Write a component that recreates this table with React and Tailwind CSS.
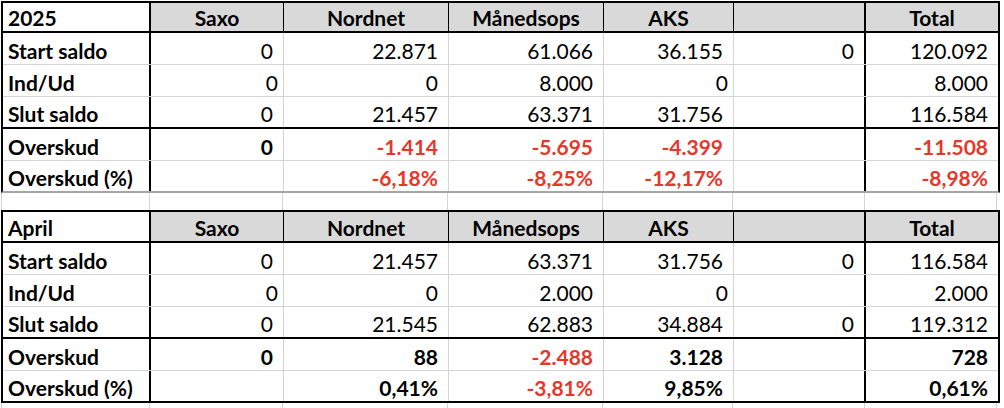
const GRID = 'grid grid-cols-[148px_133px_165px_155px_130px_132px_132px]'
const GRAY = 'border-[#d4d4d4]'
const RED = 'text-[#e6372b]'

const COLS = ['Saxo', 'Nordnet', 'Månedsops', 'AKS', '', 'Total']

const TABLES = [
  {
    title: '2025',
    bottom: 'border-b-[#a6a6a6]',
    rows: [
      { label: 'Start saldo', values: ['0', '22.871', '61.066', '36.155', '0', '120.092'] },
      { label: 'Ind/Ud', values: ['0', '0', '8.000', '0', '', '8.000'], tight: true },
      { label: 'Slut saldo', values: ['0', '21.457', '63.371', '31.756', '', '116.584'] },
      { label: 'Overskud', bold: true, values: ['0', '-1.414', '-5.695', '-4.399', '', '-11.508'] },
      { label: 'Overskud (%)', bold: true, values: ['', '-6,18%', '-8,25%', '-12,17%', '', '-8,98%'] },
    ],
  },
  {
    title: 'April',
    bottom: 'border-b-black',
    rows: [
      { label: 'Start saldo', values: ['0', '21.457', '63.371', '31.756', '0', '116.584'] },
      { label: 'Ind/Ud', values: ['0', '0', '2.000', '0', '', '2.000'], tight: true },
      { label: 'Slut saldo', values: ['0', '21.545', '62.883', '34.884', '0', '119.312'] },
      { label: 'Overskud', bold: true, values: ['0', '88', '-2.488', '3.128', '', '728'] },
      { label: 'Overskud (%)', bold: true, values: ['', '0,41%', '-3,81%', '9,85%', '', '0,61%'] },
    ],
  },
]

// right border per column: black after label column and before Total
function sideBorder(i) {
  if (i === 0 || i === 5) return 'border-r-2 border-r-black'
  if (i === 6) return ''
  return 'border-r border-r-[#d4d4d4]'
}

function Sheet({ table, first }) {
  const last = table.rows.length - 1
  return (
    <div className={`ml-px w-[999px] border-2 border-black ${table.bottom}`}>
      <div className={`${GRID} ${first ? 'h-[30px]' : 'h-[31px]'} border-b-2 border-black`}>
        <div className="flex items-end pl-[5px] pb-[3px] font-bold border-r-2 border-black">{table.title}</div>
        {COLS.map((c, i) => (
          <div
            key={i}
            className={`flex items-end justify-center pb-[3px] font-bold bg-[#d9d9d9] ${i < 5 ? 'border-r border-black' : ''} ${i === 4 ? 'border-r-2' : ''}`}
          >
            {c}
          </div>
        ))}
      </div>
      {table.rows.map((r, ri) => {
        const rowBorder =
          ri === last ? '' : ri === 2 ? 'border-b-2 border-b-black' : 'border-b border-b-[#d4d4d4]'
        return (
          <div key={ri} className={`${GRID} ${ri === last ? 'h-[30px]' : 'h-[32px]'} ${rowBorder}`}>
            <div className={`flex items-end pl-[5px] pb-[3px] font-bold ${sideBorder(0)}`}>{r.label}</div>
            {r.values.map((v, i) => {
              const neg = v.startsWith('-')
              const pad = r.tight && (i === 0 || i === 3) ? 'pr-[5px]' : 'pr-[10px]'
              return (
                <div
                  key={i}
                  className={`flex items-end justify-end pb-[3px] ${pad} ${sideBorder(i + 1)} ${r.bold ? 'font-bold' : ''} ${neg ? RED : 'text-black'}`}
                >
                  {v}
                </div>
              )
            })}
          </div>
        )
      })}
    </div>
  )
}

function GridStrip({ h }) {
  return (
    <div className={`${GRID} ${h} ml-px w-[999px] border-l ${GRAY}`}>
      {[0, 1, 2, 3, 4, 5, 6].map(i => (
        <div key={i} className={`border-r ${GRAY}`} />
      ))}
    </div>
  )
}

export default function App() {
  return (
    <div
      className="w-[1004px] h-[408px] bg-white text-black text-[21px] leading-none overflow-hidden pt-px"
      style={{ fontFamily: 'Lato, "Open Sans", sans-serif' }}
    >
      <Sheet table={TABLES[0]} first />
      <GridStrip h="h-[17px]" />
      <Sheet table={TABLES[1]} />
      <GridStrip h="h-[6px]" />
    </div>
  )
}
